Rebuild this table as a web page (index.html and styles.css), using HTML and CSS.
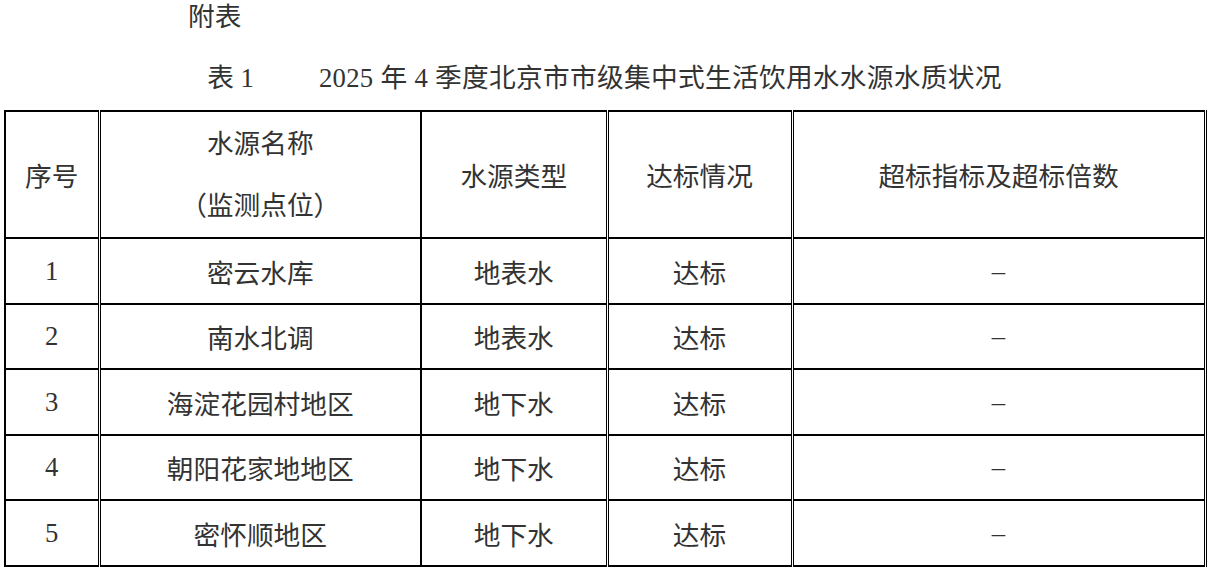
FILE: index.html
```html
<!DOCTYPE html>
<html lang="zh-CN">
<head>
<meta charset="utf-8">
<title>附表</title>
<link rel="stylesheet" href="styles.css">
</head>
<body>
<div class="page">
  <p class="appendix">附表</p>
  <p class="caption"><span class="cap-no">表 1</span><span class="cap-text">2025 年 4 季度北京市市级集中式生活饮用水水源水质状况</span></p>
  <table class="quality">
    <colgroup>
      <col class="c0"><col class="c1"><col class="c2"><col class="c3"><col class="c4">
    </colgroup>
    <thead>
      <tr class="head">
        <th class="b0">序号</th>
        <th class="b1"><div class="l2">水源名称</div><div class="l2">（监测点位）</div></th>
        <th class="b2">水源类型</th>
        <th class="b3">达标情况</th>
        <th class="b4">超标指标及超标倍数</th>
      </tr>
    </thead>
    <tbody>
      <tr class="r66"><td class="b0 num">1</td><td class="b1">密云水库</td><td class="b2">地表水</td><td class="b3">达标</td><td class="b4">–</td></tr>
      <tr class="r65"><td class="b0 num">2</td><td class="b1">南水北调</td><td class="b2">地表水</td><td class="b3">达标</td><td class="b4">–</td></tr>
      <tr class="r66"><td class="b0 num">3</td><td class="b1">海淀花园村地区</td><td class="b2">地下水</td><td class="b3">达标</td><td class="b4">–</td></tr>
      <tr class="r65"><td class="b0 num">4</td><td class="b1">朝阳花家地地区</td><td class="b2">地下水</td><td class="b3">达标</td><td class="b4">–</td></tr>
      <tr class="r66"><td class="b0 num">5</td><td class="b1">密怀顺地区</td><td class="b2">地下水</td><td class="b3">达标</td><td class="b4">–</td></tr>
    </tbody>
  </table>
</div>
</body>
</html>
```

FILE: styles.css
```css
html, body {
  margin: 0;
  padding: 0;
  background: #ffffff;
}
.page {
  font-family: "Liberation Serif", "Noto Sans CJK SC", serif;
  font-size: 26.7px;
  color: #333333;
  padding-left: 4px;
}
.appendix {
  margin: 0;
  padding-left: 184px;
  line-height: 34px;
}
.caption {
  margin: 27px 0 0 0;
  line-height: 34px;
  text-align: center;
  padding-right: 4px;
}
.cap-no {
  margin-right: 65px;
}
.cap-text {
  letter-spacing: 0.3px;
}
.quality {
  margin-top: 15px;
  border-collapse: collapse;
  table-layout: fixed;
  width: 1200px;
}
.c0 { width: 94px; }
.c1 { width: 322px; }
.c2 { width: 186px; }
.c3 { width: 185px; }
.c4 { width: 413px; }
.quality th, .quality td {
  font-weight: normal;
  text-align: center;
  vertical-align: middle;
  padding: 0;
  border-top: 2px solid #000;
  border-bottom: 2px solid #000;
}
.b0 { border-left: 2px solid #000; border-right: 3px double #000; }
.b1 { border-right: 2px solid #000; }
.b2 { border-right: 3px double #000; }
.b3 { border-right: 3px double #000; }
.b4 { border-right: 3px double #000; }
.head { height: 127px; }
.l2 { line-height: 62px; }
.r66 { height: 66px; }
.r65 { height: 65px; }
.num { font-size: 26.7px; }
```
